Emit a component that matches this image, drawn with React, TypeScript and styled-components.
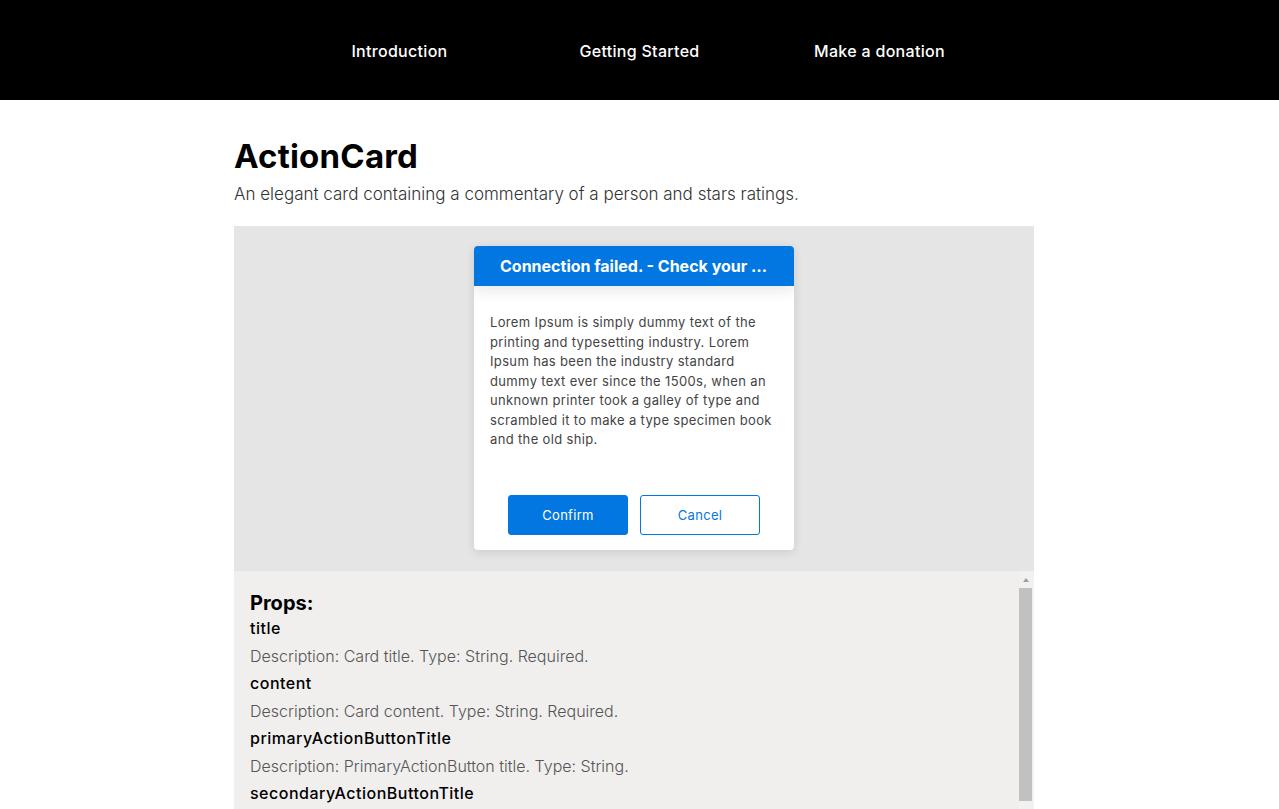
import React from 'react';
import styled, { createGlobalStyle } from 'styled-components';

const GlobalStyle = createGlobalStyle`
  html, body {
    margin: 0;
    padding: 0;
    overflow: hidden;
  }
  body {
    font-family: Inter, "Open Sans", "Liberation Sans", sans-serif;
    background: #ffffff;
    color: #000;
  }
  * {
    box-sizing: border-box;
  }
`;

const props = [
  { name: 'title', description: 'Description: Card title. Type: String. Required.' },
  { name: 'content', description: 'Description: Card content. Type: String. Required.' },
  { name: 'primaryActionButtonTitle', description: 'Description: PrimaryActionButton title. Type: String.' },
  { name: 'secondaryActionButtonTitle', description: 'Description: SecondaryActionButton title. Type: String.' },
  { name: 'onPrimaryAction', description: 'Description: Callback fired on primary button click. Type: Function.' },
  { name: 'onSecondaryAction', description: 'Description: Callback fired on secondary button click. Type: Function.' },
];

function App() {
  return (
    <>
      <GlobalStyle />
      <Nav>
        <NavLink href="#">Introduction</NavLink>
        <NavLink href="#">Getting Started</NavLink>
        <NavLink href="#">Make a donation</NavLink>
      </Nav>
      <Page>
        <Main>
          <Title>ActionCard</Title>
          <Subtitle>An elegant card containing a commentary of a person and stars ratings.</Subtitle>
          <Demo>
            <Card>
              <CardHeader>Connection failed. - Check your internet connection</CardHeader>
              <CardBody>
                Lorem Ipsum is simply dummy text of the printing and typesetting industry. Lorem
                Ipsum has been the industry standard dummy text ever since the 1500s, when an
                unknown printer took a galley of type and scrambled it to make a type specimen
                book and the old ship.
              </CardBody>
              <CardActions>
                <ActionButton primary>Confirm</ActionButton>
                <ActionButton>Cancel</ActionButton>
              </CardActions>
            </Card>
          </Demo>
          <PropsPanel>
            <PropsContent>
              <PropsTitle>Props:</PropsTitle>
              {props.map((p) => (
                <PropItem key={p.name}>
                  <PropName>{p.name}</PropName>
                  <PropDescription>{p.description}</PropDescription>
                </PropItem>
              ))}
            </PropsContent>
            <ScrollTrack>
              <ScrollArrow />
              <ScrollThumb />
            </ScrollTrack>
          </PropsPanel>
        </Main>
      </Page>
    </>
  );
}

const Nav = styled.nav`
  height: 100px;
  background: #000;
  display: flex;
  justify-content: center;
  align-items: center;
  padding-top: 2px;
`;

const NavLink = styled.a`
  width: 240px;
  text-align: center;
  color: #fff;
  text-decoration: none;
  font-size: 16px;
  font-weight: 500;
  letter-spacing: 0.3px;
`;

const Page = styled.div`
  padding-right: 11px;
`;

const Main = styled.main`
  width: 800px;
  margin: 0 auto;
`;

const Title = styled.h1`
  margin: 36px 0 0;
  font-size: 33px;
  line-height: 40px;
  font-weight: 700;
  letter-spacing: 0.2px;
`;

const Subtitle = styled.p`
  margin: 6px 0 20px;
  font-size: 17px;
  line-height: 24px;
  font-weight: 300;
  color: #333;
`;

const Demo = styled.div`
  background: #e5e5e5;
  display: flex;
  justify-content: center;
  padding: 20px 0 21px;
`;

const Card = styled.div`
  width: 320px;
  background: #fff;
  border-radius: 4px;
  overflow: hidden;
  box-shadow: 0 2px 10px rgba(0, 0, 0, 0.12);
  display: flex;
  flex-direction: column;
`;

const CardHeader = styled.div`
  height: 40px;
  line-height: 40px;
  padding: 0 26px;
  background: #0277e1;
  color: #fff;
  font-size: 16px;
  font-weight: 700;
  text-align: center;
  white-space: nowrap;
  overflow: hidden;
  text-overflow: ellipsis;
  box-shadow: 0 6px 12px rgba(0, 0, 0, 0.08);
  position: relative;
`;

const CardBody = styled.p`
  margin: 0;
  padding: 27px 16px 35px;
  font-size: 13px;
  line-height: 19.5px;
  letter-spacing: 0.35px;
  color: #444;
`;

const CardActions = styled.div`
  display: flex;
  justify-content: center;
  gap: 12px;
  padding: 10px 0 15px;
`;

const ActionButton = styled.button<{ primary?: boolean }>`
  width: 120px;
  height: 40px;
  border-radius: 3px;
  font-family: inherit;
  font-size: 13px;
  letter-spacing: 0.3px;
  border: 1px solid #0277e1;
  background: ${(p) => (p.primary ? '#0277e1' : '#fff')};
  color: ${(p) => (p.primary ? '#fff' : '#0277e1')};
  cursor: pointer;
`;

const PropsPanel = styled.div`
  height: 247px;
  display: flex;
  overflow: hidden;
  background: #f0efee;
`;

const PropsContent = styled.div`
  flex: 1;
  padding: 20px 16px;
`;

const ScrollTrack = styled.div`
  width: 15px;
  flex-shrink: 0;
  background: #f1f1f1;
  display: flex;
  flex-direction: column;
  align-items: flex-start;
`;

const ScrollArrow = styled.div`
  align-self: stretch;
  height: 17px;
  display: flex;
  justify-content: center;
  padding: 7px 2px 0 0;

  &::before {
    content: '';
    width: 0;
    height: 0;
    border-left: 3.5px solid transparent;
    border-right: 3.5px solid transparent;
    border-bottom: 4px solid #a39ca6;
  }
`;

const ScrollThumb = styled.div`
  width: 13px;
  height: 213px;
  background: #c1c1c1;
`;

const PropsTitle = styled.h3`
  margin: 0;
  font-size: 20px;
  line-height: 24px;
  font-weight: 700;
`;

const PropItem = styled.div`
  display: flex;
  flex-direction: column;
`;

const PropName = styled.span`
  font-size: 16px;
  line-height: 27px;
  font-weight: 500;
  letter-spacing: 0.5px;
`;

const PropDescription = styled.span`
  font-size: 16px;
  line-height: 28px;
  font-weight: 300;
  color: #555;
`;

export default App;
